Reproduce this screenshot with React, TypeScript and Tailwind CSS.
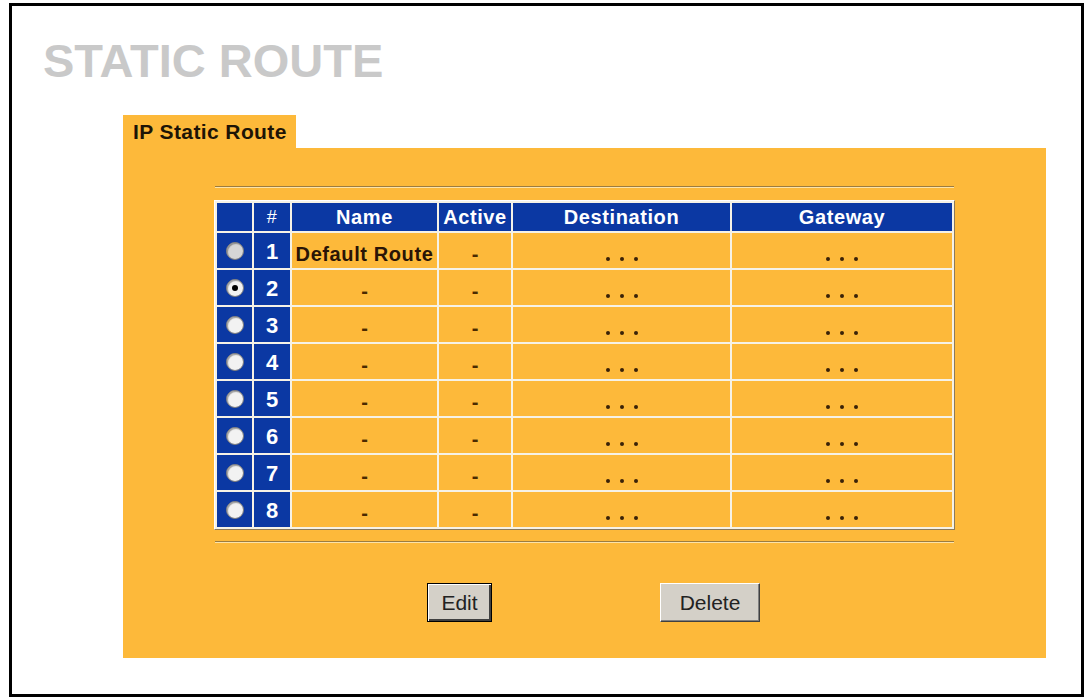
const rows = [1, 2, 3, 4, 5, 6, 7, 8];

const Radio = ({ checked, dim }: { checked?: boolean; dim?: boolean }) => (
  <div
    className={`mx-auto flex h-[18px] w-[18px] items-center justify-center rounded-full border border-[#7d7d7d] shadow-[inset_1px_1px_1px_rgba(0,0,0,0.35)] ${
      dim ? "bg-[#d6d6d6]" : "bg-[#f2f2f2]"
    }`}
  >
    {checked && <div className="h-[6px] w-[6px] rounded-full bg-black" />}
  </div>
);

const Dots = () => (
  <div className="flex justify-center gap-[10px] pt-[17px]">
    <span className="h-[4px] w-[4px] rounded-full bg-[#3a2208]" />
    <span className="h-[4px] w-[4px] rounded-full bg-[#3a2208]" />
    <span className="h-[4px] w-[4px] rounded-full bg-[#3a2208]" />
  </div>
);

const Dash = () => <div className="pt-[6px] text-[20px] font-bold leading-none text-[#4a2a00]">-</div>;

const App = () => {
  return (
    <div className="h-[700px] w-[1087px] bg-white pl-[9px] pt-[3px] font-['Liberation_Sans',Arial,sans-serif]">
      <div className="h-[694px] w-[1075px] border-[3px] border-black bg-white">
        <h1 className="ml-[31px] mt-[31px] text-[47px] font-bold leading-none text-[#c9c9c9]">STATIC ROUTE</h1>

        <div className="ml-[111px] mt-[31px] h-[33px] w-[173px] bg-[#fdb93a] pl-[10px] text-[21px] font-bold leading-[33px] tracking-[0.4px] text-[#1d1406]">
          IP Static Route
        </div>

        <div className="ml-[111px] h-[510px] w-[923px] bg-[#fdb93a] pt-[38px]">
          <div className="mx-auto w-[739px] border-t border-b border-t-[#9c7c40] border-b-[#fde3a8]" />

          <table className="mx-auto mt-[12px] w-[741px] table-fixed border-separate border-spacing-[2px] border border-t-white border-l-white border-r-[#8c7a5a] border-b-[#8c7a5a] bg-[#f6f2e6]">
            <thead>
              <tr className="text-[20px] font-bold leading-none tracking-[0.6px] text-white">
                <th className="h-[28px] w-[35px] bg-[#0b38a3] p-0" />
                <th className="h-[28px] w-[36px] bg-[#0b38a3] p-0 text-[18px] font-normal">#</th>
                <th className="h-[28px] w-[145px] bg-[#0b38a3] p-0">Name</th>
                <th className="h-[28px] w-[72px] bg-[#0b38a3] p-0">Active</th>
                <th className="h-[28px] w-[217px] bg-[#0b38a3] p-0">Destination</th>
                <th className="h-[28px] bg-[#0b38a3] p-0">Gateway</th>
              </tr>
            </thead>
            <tbody>
              {rows.map((n) => (
                <tr key={n} className="text-center">
                  <td className="h-[35px] bg-[#0b38a3] p-0 align-middle">
                    <Radio checked={n === 2} dim={n === 1} />
                  </td>
                  <td className="h-[35px] bg-[#0b38a3] p-0 pt-[2px] align-middle text-[22px] font-bold leading-none text-white">
                    {n}
                  </td>
                  <td className="h-[35px] bg-[#fdb93a] p-0 align-middle">
                    {n === 1 ? (
                      <div className="pt-[6px] text-[20px] font-bold leading-none tracking-[0.6px] text-[#2a1406]">
                        Default Route
                      </div>
                    ) : (
                      <Dash />
                    )}
                  </td>
                  <td className="h-[35px] bg-[#fdb93a] p-0 align-middle">
                    <Dash />
                  </td>
                  <td className="h-[35px] bg-[#fdb93a] p-0 align-middle">
                    <Dots />
                  </td>
                  <td className="h-[35px] bg-[#fdb93a] p-0 align-middle">
                    <Dots />
                  </td>
                </tr>
              ))}
            </tbody>
          </table>

          <div className="mx-auto mt-[11px] w-[739px] border-t border-b border-t-[#9c7c40] border-b-[#fde3a8]" />

          <div className="mt-[40px] flex justify-center gap-[168px] pl-[18px]">
            <button className="h-[39px] w-[65px] border border-black bg-[#d4d0c8] text-[21px] leading-none text-[#222] shadow-[inset_1px_1px_0_#ffffff,inset_-2px_-2px_0_#404040]">
              Edit
            </button>
            <button className="h-[39px] w-[100px] border border-t-white border-l-white border-r-[#404040] border-b-[#404040] bg-[#d4d0c8] text-[21px] leading-none text-[#222] shadow-[inset_-1px_-1px_0_#808080]">
              Delete
            </button>
          </div>
        </div>
      </div>
    </div>
  );
};

export default App;
